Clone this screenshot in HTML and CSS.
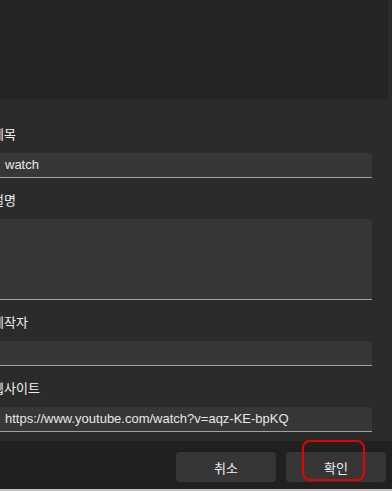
FILE: index.html
```html
<!DOCTYPE html>
<html lang="ko">
<head>
  <meta charset="UTF-8">
  <title>정보 편집</title>
  <link rel="stylesheet" href="styles.css">
</head>
<body>

  <!-- PREVIEW -->
  <div class="preview"></div>

  <!-- FORM -->
  <div class="form">
    <div class="group">
      <div class="label">제목</div>
      <div class="field">watch</div>
    </div>
    <div class="group">
      <div class="label">설명</div>
      <div class="field area"></div>
    </div>
    <div class="group">
      <div class="label">제작자</div>
      <div class="field"></div>
    </div>
    <div class="group">
      <div class="label">웹사이트</div>
      <div class="field">https://www.youtube.com/watch?v=aqz-KE-bpKQ</div>
    </div>
  </div>

  <!-- BUTTONS -->
  <div class="footer">
    <button class="btn">취소</button>
    <button class="btn">확인</button>
    <div class="highlight"></div>
  </div>
  <div class="edge"></div>

</body>
</html>
```
FILE: styles.css
```css
body {
  margin: 0;
  background: #2b2b2b;
  color: #f0f0f0;
  font-family: 'Liberation Sans', 'Noto Sans CJK KR', sans-serif;
  font-size: 13px;
  overflow: hidden;
}

.preview {
  height: 99px;
  margin-right: 4px;
  background: #242424;
}

.form {
  margin-left: -8px;
  padding: 13px 20px 9px 0;
}

.group {
  margin-top: 12px;
}

.label {
  height: 19px;
  padding-top: 1px;
  line-height: 20px;
  font-size: 13px;
  margin-bottom: 9px;
}

.field {
  height: 24px;
  line-height: 24px;
  padding-left: 13px;
  background: #373737;
  border-bottom: 1px solid #a0a0a0;
  border-radius: 4px 4px 0 0;
  color: #e8e8e8;
  white-space: nowrap;
  overflow: hidden;
}

.field.area {
  height: 80px;
}

.footer {
  position: relative;
  height: 48px;
  background: #202020;
  display: flex;
  justify-content: flex-end;
  align-items: flex-start;
  gap: 10px;
  padding-right: 6px;
}

.btn {
  margin-top: 11px;
  width: 100px;
  height: 30px;
  background: #363636;
  color: #f0f0f0;
  border: none;
  border-radius: 4px;
  font-family: 'Liberation Sans', 'Noto Sans CJK KR', sans-serif;
  font-size: 13px;
}

.highlight {
  position: absolute;
  left: 302px;
  top: -1px;
  width: 59px;
  height: 37px;
  border: 2px solid #e60000;
  border-radius: 8px;
}

.edge {
  height: 2px;
  background: #c4c4c4;
}
```
